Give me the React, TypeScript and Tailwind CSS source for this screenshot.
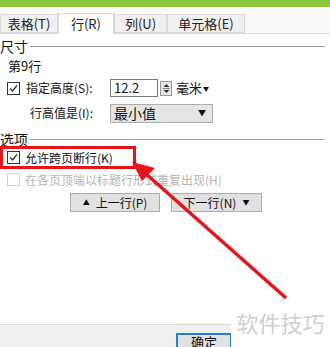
import React from 'react';

const font = { fontFamily: '"Noto Sans CJK SC", "Noto Sans", sans-serif' };

function Check({ checked, disabled }: { checked?: boolean; disabled?: boolean }) {
  return (
    <span
      className={`inline-flex h-[13px] w-[13px] shrink-0 items-center justify-center border bg-white ${
        disabled ? 'border-[#cfcfcf]' : 'border-[#333]'
      }`}
    >
      {checked && (
        <svg width="11" height="11" viewBox="0 0 11 11">
          <path d="M2 5.5 L4.5 8 L9 2.5" fill="none" stroke="#333" strokeWidth="1.3" />
        </svg>
      )}
    </span>
  );
}

function Tab({ label, active, w }: { label: string; active?: boolean; w: string }) {
  return (
    <div
      className={`flex items-center justify-center border border-[#d9d9d9] text-[13px] text-[#222] ${w} ${
        active ? 'z-10 -mb-px h-[21px] border-b-white bg-white' : 'h-[19px] bg-[#f0f0f0]'
      }`}
    >
      {label}
    </div>
  );
}

function Group({ title }: { title: string }) {
  return (
    <div className="flex h-[14px] items-center gap-[2px]">
      <span className="text-[14px] leading-none text-[#111]">{title}</span>
      <div className="mr-[5px] h-px flex-1 bg-[#a0a0a0]" />
    </div>
  );
}

export default function App() {
  return (
    <div className="relative h-[347px] w-[330px] overflow-hidden bg-white text-[#111]" style={font}>
      <div className="h-[7px] bg-[#8dc63f]" />

      {/* tabs */}
      <div className="flex h-[27px] items-end border-b border-[#d9d9d9] bg-[#fafafa] pt-[6px]">
        <Tab label="表格(T)" w="w-[58px]" />
        <Tab label="行(R)" w="w-[56px]" active />
        <Tab label="列(U)" w="w-[53px]" />
        <Tab label="单元格(E)" w="w-[78px]" />
      </div>

      <div className="flex flex-col pt-[5px]">
        <Group title="尺寸" />
        <div className="mt-[4px] flex h-[17px] items-center pl-[8px] text-[13px]">第9行</div>

        <div className="mt-[5px] flex h-[18px] items-center text-[12px]">
          <div className="flex w-[110px] items-center gap-[6px] pl-[7px]">
            <Check checked />
            <span>指定高度(S):</span>
          </div>
          <div className="flex h-[18px] w-[48px] items-center border border-[#7a7a7a] bg-white pl-[3px] text-[13px]">
            12.2
          </div>
          <div className="ml-[2px] flex h-[15px] w-[12px] flex-col items-center justify-center border border-[#9a9a9a] bg-[#eaeaea]">
            <svg width="7" height="11" viewBox="0 0 7 11">
              <path d="M0.5 4 L3.5 1 L6.5 4 Z M0.5 7 L3.5 10 L6.5 7 Z" fill="#333" />
              <rect x="0" y="5" width="7" height="1" fill="#888" />
            </svg>
          </div>
          <span className="ml-[4px] text-[13px]">毫米</span>
          <span className="ml-[1px] text-[6px]">▼</span>
        </div>

        <div className="mt-[7px] flex h-[18px] items-center text-[12px]">
          <span className="w-[110px] pl-[30px]">行高值是(I):</span>
          <div className="flex h-[19px] w-[103px] items-center justify-between border border-[#adadad] bg-[#e5e5e5] pl-[3px] pr-[6px]">
            <span className="text-[14px]">最小值</span>
            <span className="text-[8px]">▼</span>
          </div>
        </div>

        <div className="mt-[10px]">
          <Group title="选项" />
        </div>

        <div className="flex h-[23px] w-[136px] items-center gap-[5px] border-[3px] border-[#e8141a] pl-[4px] text-[12px]">
          <Check checked />
          <span>允许跨页断行(K)</span>
        </div>

        <div className="mt-[2px] flex h-[17px] items-center gap-[5px] pl-[7px] text-[12px] text-[#b4b4b4]">
          <Check disabled />
          <span>在各页顶端以标题行形式重复出现(H)</span>
        </div>

        <div className="mt-[5px] flex h-[19px] gap-[11px] pl-[70px] text-[12px]">
          <div className="flex w-[90px] items-center justify-center gap-[6px] border border-[#adadad] bg-[#e1e1e1]">
            <span className="text-[7px]">▲</span>
            <span>上一行(P)</span>
          </div>
          <div className="flex w-[91px] items-center justify-center gap-[6px] border border-[#adadad] bg-[#e1e1e1]">
            <span>下一行(N)</span>
            <span className="text-[7px]">▼</span>
          </div>
        </div>
      </div>

      {/* bottom bar */}
      <div className="absolute bottom-0 left-0 right-0 flex h-[23px] border-t border-[#dcdcdc] bg-[#f0f0f0] pl-[176px] pt-[8px]">
        <div className="flex h-[20px] w-[56px] justify-center border-2 border-[#2d7bd2] bg-[#e1e1e1] text-[13px] leading-[14px]">
          确定
        </div>
      </div>

      {/* watermark */}
      <div className="absolute left-[231px] top-[305px] flex h-[42px] w-[99px] items-start justify-center whitespace-nowrap bg-white pt-[3px] text-[22px] leading-[28px] text-[#cfcfcf]">
        软件技巧
      </div>

      {/* arrow */}
      <svg className="pointer-events-none absolute left-0 top-0" width="330" height="347">
        <line x1="286" y1="298" x2="145" y2="173" stroke="#e8141a" strokeWidth="3.5" />
        <path d="M132 162 L155 168 L142 181 Z" fill="#e8141a" />
      </svg>
    </div>
  );
}
